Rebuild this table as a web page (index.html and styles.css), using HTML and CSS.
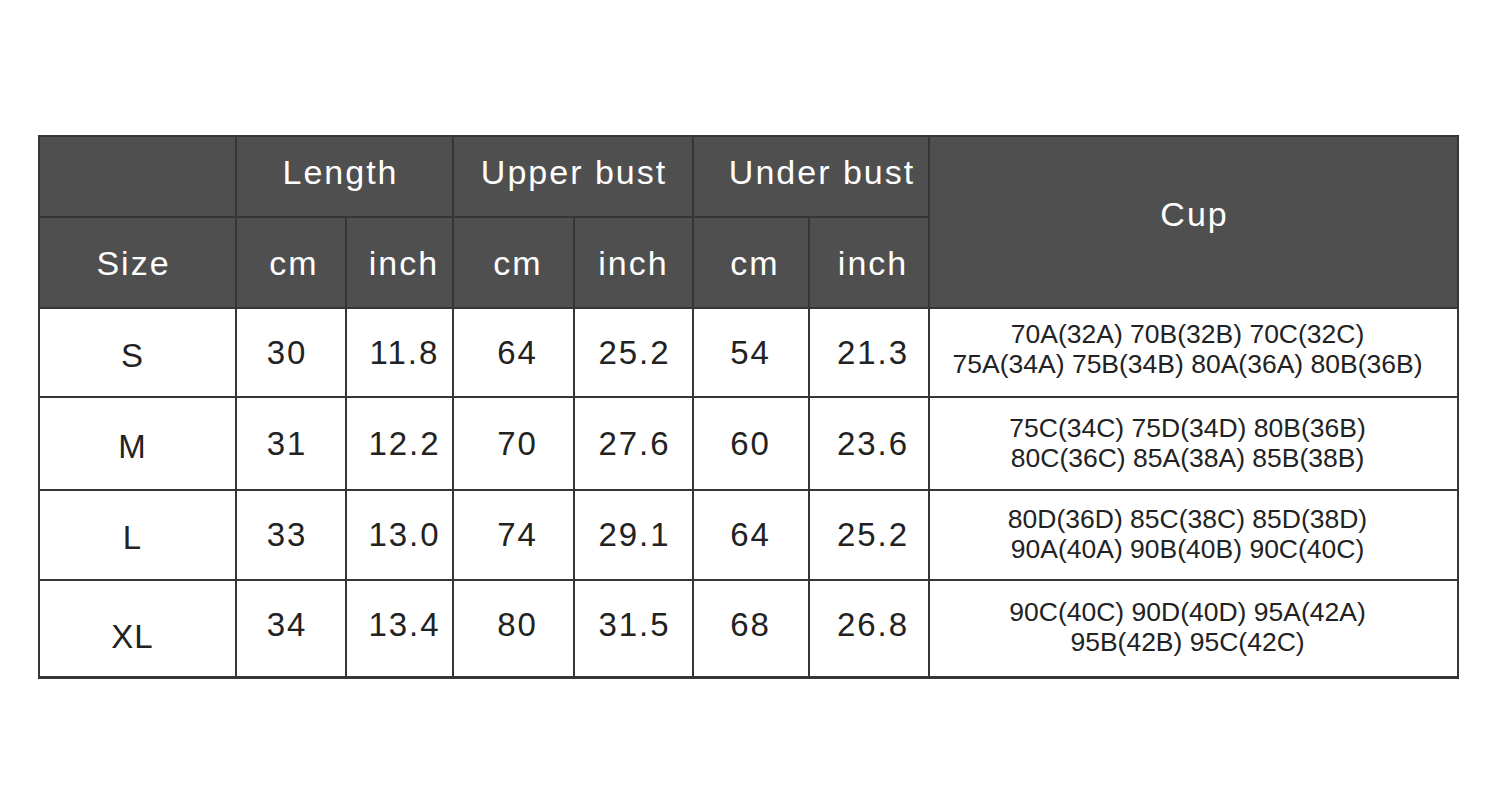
FILE: index.html
```html
<!DOCTYPE html>
<html>
<head>
<meta charset="utf-8">
<link rel="stylesheet" href="styles.css">
</head>
<body>
<div class="page">
<table class="chart">
  <colgroup>
    <col class="c-size"><col class="c-len-cm"><col class="c-len-in"><col class="c-up-cm"><col class="c-up-in"><col class="c-un-cm"><col class="c-un-in"><col class="c-cup">
  </colgroup>
  <thead>
    <tr class="h1">
      <th></th>
      <th colspan="2" class="g-len">Length</th>
      <th colspan="2" class="g-up">Upper bust</th>
      <th colspan="2" class="g-un">Under bust</th>
      <th rowspan="2" class="cup-h">Cup</th>
    </tr>
    <tr class="h2">
      <th class="size-h">Size</th>
      <th>cm</th><th>inch</th>
      <th>cm</th><th>inch</th>
      <th>cm</th><th>inch</th>
    </tr>
  </thead>
  <tbody>
    <tr class="r-s">
      <td class="size">S</td>
      <td>30</td><td>11.8</td><td>64</td><td>25.2</td><td>54</td><td>21.3</td>
      <td class="cup">70A(32A) 70B(32B) 70C(32C)<br>75A(34A) 75B(34B) 80A(36A) 80B(36B)</td>
    </tr>
    <tr class="r-m">
      <td class="size">M</td>
      <td>31</td><td>12.2</td><td>70</td><td>27.6</td><td>60</td><td>23.6</td>
      <td class="cup">75C(34C) 75D(34D) 80B(36B)<br>80C(36C) 85A(38A) 85B(38B)</td>
    </tr>
    <tr class="r-l">
      <td class="size">L</td>
      <td>33</td><td>13.0</td><td>74</td><td>29.1</td><td>64</td><td>25.2</td>
      <td class="cup">80D(36D) 85C(38C) 85D(38D)<br>90A(40A) 90B(40B) 90C(40C)</td>
    </tr>
    <tr class="r-xl">
      <td class="size">XL</td>
      <td>34</td><td>13.4</td><td>80</td><td>31.5</td><td>68</td><td>26.8</td>
      <td class="cup">90C(40C) 90D(40D) 95A(42A)<br>95B(42B) 95C(42C)</td>
    </tr>
  </tbody>
</table>
</div>
</body>
</html>
```

FILE: styles.css
```css
html, body {
  margin: 0;
  padding: 0;
  background: #ffffff;
}

.page {
  width: 1500px;
  height: 800px;
  padding: 135px 0 0 38px;
  box-sizing: border-box;
  font-family: "Liberation Sans", Arial, sans-serif;
}

.chart {
  border-collapse: collapse;
  table-layout: fixed;
  width: 1419px;
}

.c-size { width: 197px; }
.c-len-cm { width: 110px; }
.c-len-in { width: 107px; }
.c-up-cm { width: 121px; }
.c-up-in { width: 119px; }
.c-un-cm { width: 116px; }
.c-un-in { width: 120px; }
.c-cup { width: 529px; }

.chart th,
.chart td {
  border: 2px solid #363636;
  padding: 0;
  text-align: center;
  vertical-align: middle;
}

/* ---------- header ---------- */
.chart th {
  background: #4f4f4f;
  color: #ffffff;
  font-weight: normal;
  font-size: 34px;
  letter-spacing: 2px;
}

.h1 th {
  height: 71px;
  padding-bottom: 8px;
}

.h1 th.g-len { padding-right: 8px; }
.h1 th.g-up { padding-left: 2px; }
.h1 th.g-un { padding-left: 22px; }

.h2 th {
  height: 83px;
  padding-top: 4px;
  padding-bottom: 2px;
  padding-left: 2px;
}

.h2 th.size-h { padding-right: 10px; padding-left: 2px; }
.h2 th:nth-child(2) { padding-left: 6px; }
.h2 th:nth-child(3) { padding-left: 9px; }
.h2 th:nth-child(4) { padding-left: 9px; }
.h2 th:nth-child(5) { padding-left: 0; }
.h2 th:nth-child(6) { padding-left: 8px; }
.h2 th:nth-child(7) { padding-left: 8px; }

.chart th.cup-h {
  padding-top: 0;
  padding-bottom: 16px;
  padding-left: 2px;
}

/* ---------- body ---------- */
.chart td {
  color: #222222;
  font-size: 33px;
  letter-spacing: 2px;
  height: calc(var(--h) - 18px);
  padding-top: 8px;
  padding-bottom: 8px;
}

.chart td:nth-child(2) { padding-right: 10px; padding-left: 2px; }
.chart td:nth-child(3) { padding-left: 10px; }
.chart td:nth-child(4) { padding-left: 8px; }
.chart td:nth-child(5) { padding-left: 2px; }
.chart td:nth-child(6) { padding-right: 3px; padding-left: 2px; }
.chart td:nth-child(7) { padding-left: 8px; }

.chart td.size {
  letter-spacing: 1px;
  padding-top: 11px;
  padding-bottom: 5px;
  padding-right: 10px;
}

.chart td.cup {
  font-size: 26.5px;
  letter-spacing: 0;
  line-height: 30px;
  padding-top: 7px;
  padding-bottom: 9px;
  padding-right: 12px;
}

.r-s { --h: 89px; }
.r-m { --h: 93px; }
.r-l { --h: 90px; }
.r-xl { --h: 97px; }

.r-s td.cup { padding-top: 4px; padding-bottom: 12px; }

.r-xl td { padding-top: 4px; padding-bottom: 12px; }
.r-xl td.size { padding-top: 16px; padding-bottom: 0; }
.r-xl td.cup { padding-top: 6px; padding-bottom: 10px; }

.r-xl td {
  border-bottom-width: 3px;
}
```
